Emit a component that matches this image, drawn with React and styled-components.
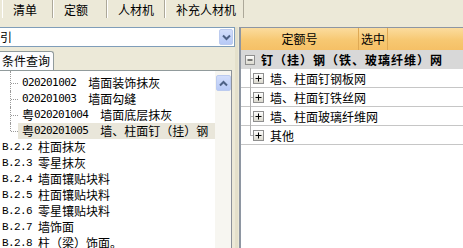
import React from "react";
import styled, { createGlobalStyle } from "styled-components";

const CJK = `"Noto Sans CJK SC", "Noto Sans", sans-serif`;

const GlobalStyle = createGlobalStyle`
  html, body { margin: 0; padding: 0; background: #ece9d8; overflow: hidden; }
  body { font-family: ${CJK}; font-size: 12px; color: #000; }
`;

const Window = styled.div`
  width: 463px;
  height: 248px;
  display: flex;
  flex-direction: column;
  background: #ece9d8;
  overflow: hidden;
  font-family: ${CJK};
  font-size: 12px;
`;

const TabBar = styled.div`
  display: flex;
  flex: none;
  height: 18px;
  padding-left: 2px;
`;

const Tab = styled.div`
  width: ${(p) => p.$w}px;
  box-sizing: border-box;
  border-left: 1px solid #ffffff;
  border-right: 1px solid #aca899;
  padding-left: 10px;
  padding-top: 1px;
  line-height: 18px;
  white-space: nowrap;
`;

const Body = styled.div`
  flex: 1;
  display: flex;
  min-height: 0;
  padding-top: 9px;
`;

const LeftPane = styled.div`
  width: 233px;
  flex: none;
  display: flex;
  flex-direction: column;
`;

const Combo = styled.div`
  width: 235px;
  height: 20px;
  box-sizing: border-box;
  flex: none;
  background: #fff;
  border: 1px solid #7f9db9;
  border-left: none;
  display: flex;
  align-items: center;
  justify-content: space-between;
  padding-right: 1px;
  line-height: 18px;
  position: relative;
  z-index: 1;
`;

const BlueButton = styled.div`
  width: 14px;
  height: 16px;
  box-sizing: border-box;
  border: 1px solid #bccbef;
  border-radius: 2px;
  background: linear-gradient(#d3defb, #b7c9f6);
  display: flex;
  align-items: center;
  justify-content: center;
  flex: none;
`;

const QueryTab = styled.div`
  width: 54px;
  height: 19px;
  box-sizing: border-box;
  margin-top: 4px;
  background: #fcfcfe;
  border-top: 1px solid #919b9c;
  border-right: 1px solid #919b9c;
  border-radius: 0 3px 0 0;
  padding-left: 2px;
  line-height: 18px;
  white-space: nowrap;
  flex: none;
`;

const TreeBox = styled.div`
  flex: 1;
  width: 232px;
  box-sizing: border-box;
  background: #fff;
  border-top: 1px solid #919b9c;
  border-right: 1px solid #8c9199;
  display: flex;
  min-height: 0;
`;

const TreeList = styled.div`
  flex: 1;
  min-width: 0;
  padding-top: 4px;
  overflow: hidden;
`;

const ScrollBar = styled.div`
  width: 16px;
  flex: none;
  background: #f7f6f1;
  padding-top: 4px;
  display: flex;
  flex-direction: column;
  align-items: center;
`;

const ScrollBtn = styled(BlueButton)`
  width: 15px;
  height: 16px;
`;

const ChildRow = styled.div`
  position: relative;
  height: 16px;
  display: flex;
  padding-left: 18px;
  white-space: nowrap;
  &::before {
    content: "";
    position: absolute;
    left: 10px;
    top: ${(p) => (p.$first ? "-4px" : "0")};
    bottom: ${(p) => (p.$last ? "8px" : "0")};
    border-left: 1px dotted #9a9a9a;
  }
  &::after {
    content: "";
    position: absolute;
    left: 11px;
    top: 8px;
    width: 7px;
    border-top: 1px dotted #9a9a9a;
  }
`;

const ChildLabel = styled.div`
  flex: 1;
  min-width: 0;
  overflow: hidden;
  padding-left: 4px;
  line-height: 16px;
  background: ${(p) => (p.$selected ? "#e9e6da" : "transparent")};
  display: flex;
  align-items: center;
`;

const Code = styled.span`
  font-family: "DejaVu Sans Mono", "Liberation Mono", monospace;
  font-size: 11px;
  letter-spacing: -0.6px;
`;

const SectionCode = styled.span`
  font-family: "Liberation Mono", "DejaVu Sans Mono", monospace;
  font-size: 11px;
  letter-spacing: -0.6px;
`;

const Name = styled.span`
  margin-left: ${(p) => p.$gap}px;
  font-family: ${CJK};
  font-size: 12px;
`;

const SectionRow = styled.div`
  height: 16px;
  line-height: 16px;
  padding-left: 2px;
  display: flex;
  align-items: center;
  white-space: nowrap;
`;

const Splitter = styled.div`
  width: 6px;
  flex: none;
  background: linear-gradient(90deg, #ece9d8 0, #ece9d8 2px, #e4e0cb 2px, #e4e0cb 5px, #ece9d8 5px);
`;

const RightPane = styled.div`
  flex: 1;
  min-width: 0;
  display: flex;
  flex-direction: column;
  background: #fff;
  border-left: 2px solid #8e96a2;
  border-top: 1px solid #8e96a2;
`;

const Header = styled.div`
  height: 22px;
  flex: none;
  display: flex;
  background: linear-gradient(#fbdc9e, #f7c872 55%, #f5c066);
`;

const HeaderCell = styled.div`
  width: ${(p) => p.$w}px;
  box-sizing: border-box;
  border-right: 1px solid #dfa954;
  text-align: center;
  line-height: 22px;
  white-space: nowrap;
`;

const GroupRow = styled.div`
  height: 19px;
  flex: none;
  background: #d8d8d8;
  display: flex;
  align-items: center;
  padding-left: 4px;
  white-space: nowrap;
`;

const GroupTitle = styled.span`
  margin-left: 6px;
  font-weight: bold;
  letter-spacing: 1px;
`;

const ItemRow = styled.div`
  position: relative;
  height: 19px;
  box-sizing: border-box;
  flex: none;
  border-bottom: 1px solid #c6c6c6;
  display: flex;
  align-items: center;
  padding-left: 12px;
  white-space: nowrap;
  &::before {
    content: "";
    position: absolute;
    left: 9px;
    top: -1px;
    height: ${(p) => (p.$last ? "10px" : "20px")};
    border-left: 1px solid #b0b0b0;
  }
  &::after {
    content: "";
    position: absolute;
    left: 9px;
    top: 9px;
    width: 3px;
    border-top: 1px solid #b0b0b0;
  }
`;

const ItemText = styled.span`
  margin-left: 6px;
`;

const ToggleWrap = styled.span`
  display: inline-flex;
  flex: none;
  position: relative;
  z-index: 1;
`;

function Toggle({ open, size = 11 }) {
  const m = size / 2;
  return (
    <ToggleWrap>
      <svg width={size} height={size} viewBox={`0 0 ${size} ${size}`}>
        <defs>
          <linearGradient id="tg" x1="0" y1="0" x2="0" y2="1">
            <stop offset="0" stopColor="#ffffff" />
            <stop offset="1" stopColor="#d9d7cc" />
          </linearGradient>
        </defs>
        <rect x="0.5" y="0.5" width={size - 1} height={size - 1} fill="url(#tg)" stroke="#8f8f8f" />
        <line x1="2.5" y1={m} x2={size - 2.5} y2={m} stroke="#000" strokeWidth="1" />
        {!open && <line x1={m} y1="2.5" x2={m} y2={size - 2.5} stroke="#000" strokeWidth="1" />}
      </svg>
    </ToggleWrap>
  );
}

function Chevron({ up }) {
  return (
    <svg width="9" height="7" viewBox="0 0 9 7">
      <path
        d={up ? "M1 5.5 L4.5 2 L8 5.5" : "M1 1.5 L4.5 5 L8 1.5"}
        fill="none"
        stroke="#4d6185"
        strokeWidth="2"
      />
    </svg>
  );
}

const tabs = [
  { label: "清单", w: 51 },
  { label: "定额", w: 54 },
  { label: "人材机", w: 58 },
  { label: "补充人材机", w: 79 },
];

const children = [
  { prefix: "", code: "020201002", name: "墙面装饰抹灰" },
  { prefix: "", code: "020201003", name: "墙面勾缝" },
  { prefix: "粤", code: "020201004", name: "墙面底层抹灰" },
  { prefix: "粤", code: "020201005", name: "墙、柱面钉（挂）钢（铁、玻璃纤维）网", selected: true },
];

const sections = [
  ["B.2.2", "柱面抹灰"],
  ["B.2.3", "零星抹灰"],
  ["B.2.4", "墙面镶贴块料"],
  ["B.2.5", "柱面镶贴块料"],
  ["B.2.6", "零星镶贴块料"],
  ["B.2.7", "墙饰面"],
  ["B.2.8", "柱（梁）饰面。"],
];

const items = ["墙、柱面钉钢板网", "墙、柱面钉铁丝网", "墙、柱面玻璃纤维网", "其他"];

export default function App() {
  return (
    <Window>
      <GlobalStyle />
      <TabBar>
        {tabs.map((t) => (
          <Tab key={t.label} $w={t.w}>
            {t.label}
          </Tab>
        ))}
      </TabBar>
      <Body>
        <LeftPane>
          <Combo>
            <span>引</span>
            <BlueButton>
              <Chevron />
            </BlueButton>
          </Combo>
          <QueryTab>条件查询</QueryTab>
          <TreeBox>
            <TreeList>
              {children.map((c, i) => (
                <ChildRow key={c.code} $first={i === 0} $last={i === children.length - 1}>
                  <ChildLabel $selected={c.selected}>
                    {c.prefix && <span>{c.prefix}</span>}
                    <Code>{c.code}</Code>
                    <Name $gap={12}>{c.name}</Name>
                  </ChildLabel>
                </ChildRow>
              ))}
              {sections.map(([code, name]) => (
                <SectionRow key={code}>
                  <SectionCode>{code}</SectionCode>
                  <Name $gap={6}>{name}</Name>
                </SectionRow>
              ))}
            </TreeList>
            <ScrollBar>
              <ScrollBtn>
                <Chevron up />
              </ScrollBtn>
            </ScrollBar>
          </TreeBox>
        </LeftPane>
        <Splitter />
        <RightPane>
          <Header>
            <HeaderCell $w={118}>定额号</HeaderCell>
            <HeaderCell $w={29}>选中</HeaderCell>
          </Header>
          <GroupRow>
            <Toggle open size={10} />
            <GroupTitle>钉（挂）钢（铁、玻璃纤维）网</GroupTitle>
          </GroupRow>
          {items.map((t, i) => (
            <ItemRow key={t} $last={i === items.length - 1}>
              <Toggle />
              <ItemText>{t}</ItemText>
            </ItemRow>
          ))}
        </RightPane>
      </Body>
    </Window>
  );
}
